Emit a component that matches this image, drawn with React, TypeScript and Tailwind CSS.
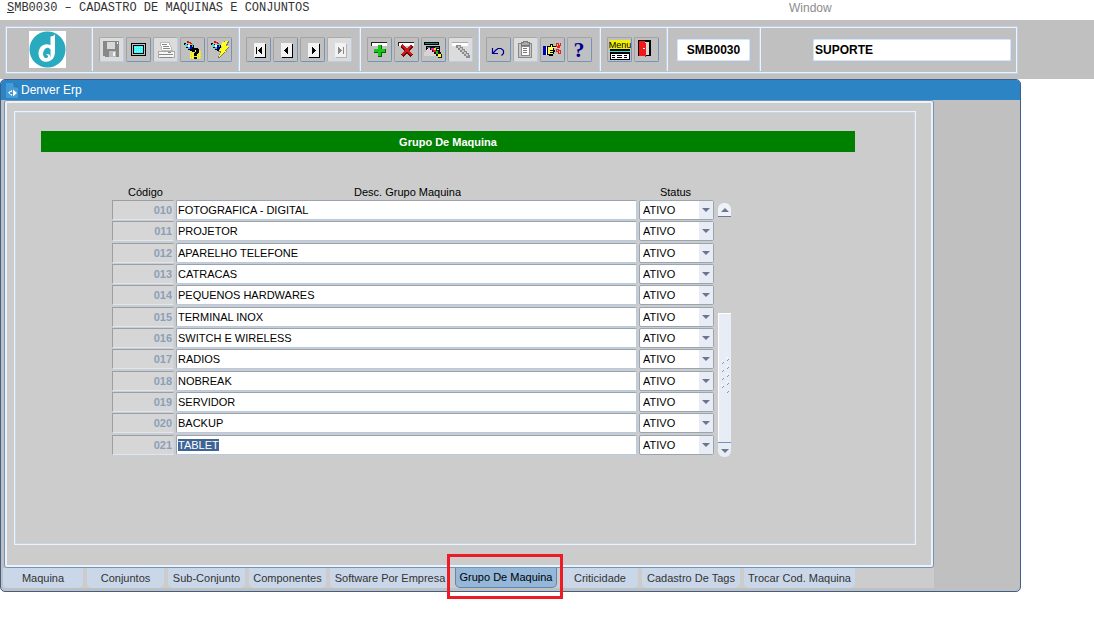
import { useEffect, useRef, type ReactNode } from "react";

const rows = [
  ["010", "FOTOGRAFICA - DIGITAL"],
  ["011", "PROJETOR"],
  ["012", "APARELHO TELEFONE"],
  ["013", "CATRACAS"],
  ["014", "PEQUENOS HARDWARES"],
  ["015", "TERMINAL INOX"],
  ["016", "SWITCH E WIRELESS"],
  ["017", "RADIOS"],
  ["018", "NOBREAK"],
  ["019", "SERVIDOR"],
  ["020", "BACKUP"],
  ["021", "TABLET"],
];

const tabs = [
  { name: "Maquina", width: "w-[80px]" },
  { name: "Conjuntos", width: "w-[77px]" },
  { name: "Sub-Conjunto", width: "w-[77px]" },
  { name: "Componentes", width: "w-[77px]" },
  { name: "Software Por Empresa", width: "w-[120px]" },
  { name: "Grupo De Maquina", width: "w-[102px]" },
  { name: "Criticidade", width: "w-[76px]" },
  { name: "Cadastro De Tags", width: "w-[98px]" },
  { name: "Trocar Cod. Maquina", width: "w-[111px]" },
];

function Tool({ label, disabled, children }: { label: string; disabled?: boolean; children: ReactNode }) {
  return (
    <button
      type="button"
      aria-label={label}
      disabled={disabled}
      className={
        disabled
          ? "h-[25px] w-[25px] shrink-0 rounded-[2px] border border-t-[#aaa] border-l-[#aaa] border-r-[#b9cde6] border-b-[#b9cde6] bg-[#dcdcdc]"
          : "h-[25px] w-[25px] shrink-0 rounded-[2px] border border-t-[#a3a3a3] border-l-[#a3a3a3] border-r-[#7394b8] border-b-[#7394b8] bg-[#c0c0c0]"
      }
    >
      <svg viewBox="1 1 23 23" className="block h-[23px] w-[23px]" shapeRendering="crispEdges">
        {children}
      </svg>
    </button>
  );
}

function Divider() {
  return (
    <div className="flex w-[2px] shrink-0 self-stretch border-l border-[#bcd0ea] bg-[#edf3fb]" />
  );
}

function Group({ className, children }: { className: string; children: ReactNode }) {
  return (
    <div className={`flex shrink-0 items-center ${className}`}>
      <div className="flex flex-1 gap-[2px] pl-[6px]">{children}</div>
      <Divider />
    </div>
  );
}

function Page({ glyph, dim }: { glyph: string; dim?: boolean }) {
  return (
    <>
      <path d="M9 7h11v14H9z" fill={dim ? "#b4b4b4" : "#000"} />
      <path d="M8 6h11v14H8z" fill="#f2f2f2" />
      <path d={glyph} fill={dim ? "#888" : "#000"} />
    </>
  );
}

function Pen() {
  return (
    <>
      <path d="M4 6h2v1h2v1h6v4h-1v2h-3v-1H8v-2H6V8H4z" fill="#000" />
      <path d="M5 7h2v1h1v2H6V9H5z" fill="#4adbe8" />
      <path d="M7 4h2v1h2v1h1v1h-2V6H7z" fill="#d01818" />
      <path d="M8 8h2v2H8z" fill="#fff" />
      <path d="M8 10h2v2H8zM12 7h1v3h-1z" fill="#16c8d8" />
      <path d="M10 9h2v3h-2z" fill="#0000e0" />
    </>
  );
}

function Logo() {
  return (
    <svg viewBox="0 0 37 37" className="block h-[37px] w-[37px] bg-white" role="img" aria-label="Denver">
      <circle cx="18.500" cy="18.500" r="18" fill="#2aaabf" />
      <path d="M21.500 5.500c2.500 0 3.800-1 4.500-2.500v17.500c0 6-3.600 10.300-8.600 10.300-4.600 0-7.900-3.400-7.900-8.300 0-5.400 3.500-9.300 8.200-9.300 1.400 0 2.700.3 3.800 1z" fill="#fff" />
      <path d="M21.500 18.500c-1.400-1.900-3.500-2.200-5-1-2.600 2.100-3.300 6.700-1 8.900 1.300 1.200 3.100.7 3.500-.6.300-1.300-.6-2.100-1.900-1.700.8-2 4.100-1.300 4 1.400 0 1.500-.8 2.700-2 3.700 2-1.400 2.600-3.700 2.400-6.700z" fill="#2aaabf" />
    </svg>
  );
}

function Toolbar() {
  return (
    <header className="h-[59px] bg-[#c0c0c0] pt-[6px] pr-[76px] pl-[5px]">
      <div className="flex h-[48px] border border-[#bcd0ea] p-px pb-[2px] inset-shadow-[0_0_0_1px_#edf3fb]">
        <div className="flex w-[86px] shrink-0 items-center">
          <div className="flex-1 pl-[22px]">
            <Logo />
          </div>
          <Divider />
        </div>
        <Group className="w-[147px]">
          <Tool label="Salvar" disabled>
            <path d="M4 4h16v16H6v-1H4z" fill="#888" />
            <path d="M8 5h8v7H8z" fill="#d8d8d8" />
            <path d="M10 14h7v6h-7z" fill="#bbb" />
            <path d="M14 15h2v4h-2zM18 5h1v2h-1z" fill="#f4f4f4" />
          </Tool>
          <Tool label="Tela">
            <path d="M5 6h15v13H5z" fill="#000" />
            <path d="M6 7h13v11H6z" fill="#c0c0c0" />
            <path d="M7 8h11v9H7z" fill="#000" />
            <path d="M8 9h9v7H8z" fill="#3ff" />
            <path d="M9 10.500h1m1 0h1m1 0h1m1 0h1M9 12.500h1m1 0h1m1 0h1m1 0h1M9 14.500h1m1 0h1m1 0h1m1 0h1" stroke="#aff" />
          </Tool>
          <Tool label="Imprimir" disabled>
            <path d="M7 5h9l3 8H9z" fill="#fff" stroke="#bbb" />
            <path d="M9 7.500h5M10 9.500h6M10 11.500h7" stroke="#888" />
            <path d="M5 14h16v6H5z" fill="#f6f6f6" stroke="#aaa" />
            <path d="M6 17.500h14M7 20.500h12" stroke="#888" />
            <path d="M15 15h3v1h-3z" fill="#888" />
          </Tool>
          <Tool label="Entrar consulta">
            <path d="M10 13h11v9H10z" fill="#f4f43c" />
            <path d="M11 13v9M14 13v9M18 13v9M20 13v9" stroke="#d4d040" strokeDasharray="1 1" />
            <Pen />
            <path d="M12 12h1v-1h5v1h1v4h-1v1h-1v2h-3v-3h1v-1h1v-2h-1v2h-3zM14 20h3v2h-3z" fill="#000" />
          </Tool>
          <Tool label="Executar consulta">
            <Pen />
            <path d="M17 4h5v2h-1v2h-1v1h2v2h-1v1h-1v1h-1v1h1v1h-2v1h-1v1h-1v1h-1v1h-1v1h-1v1h-2v-2h1v-2h1v-2h-2v-1h1v-2h1v-1h2v-2h-2V9h1V7h1V5h1z" fill="#777" />
            <path d="M18 4h3v1h-1v2h-1v2h3v1h-1v1h-1v1h-1v1h-1v1h1v1h-2v1h-1v1h-1v1h-1v1h-1v1h-1v-2h1v-2h1v-2h-2v-1h1v-2h2v-2h-2V9h1V7h1V5h2z" fill="#ffff20" />
          </Tool>
        </Group>
        <Group className="w-[121px]">
          <Tool label="Primeiro registro"><Page glyph="M10 10h1v7h-1zM15 10h1v7h-1v-1h-1v-1h-1v-1h-1v-1h1v-1h1v-1h1z" /></Tool>
          <Tool label="Registro anterior"><Page glyph="M14 10h1v7h-1v-1h-1v-1h-1v-1h-1v-1h1v-1h1v-1h1z" /></Tool>
          <Tool label="Próximo registro"><Page glyph="M12 10h1v1h1v1h1v1h1v1h-1v1h-1v1h-1v1h-1z" /></Tool>
          <Tool label="Último registro" disabled><Page dim glyph="M16 10h1v7h-1zM11 10h1v1h1v1h1v1h1v1h-1v1h-1v1h-1v1h-1z" /></Tool>
        </Group>
        <Group className="w-[119px]">
          <Tool label="Inserir registro">
            <path d="M4 5h16v4H4z" fill="#fff" /><path d="M4 5h16v1H4zM4 5h1v4H4z" fill="#222" />
            <path d="M11 8h4v4h4v4h-4v4h-4v-4H7v-4h4z" fill="#0a5f0a" />
            <path d="M11 8h3v4h4v3h-4v4h-3v-4H7v-3h4z" fill="#14c814" />
          </Tool>
          <Tool label="Excluir registro">
            <path d="M4 5h16v4H4z" fill="#fff" /><path d="M4 5h16v1H4zM4 5h1v4H4z" fill="#222" />
            <path d="M8 9l10 10M18 9L8 19" stroke="#6a0808" strokeWidth="3" />
            <path d="M8 8l10 10M17 9L8 18" stroke="#d01818" strokeWidth="2" />
          </Tool>
          <Tool label="Limpar registro">
            <path d="M3 5h15v3H3z" fill="#000" /><path d="M4 6h13v1H4z" fill="#108888" />
            <path d="M5 9h14v10H5z" fill="#000" /><path d="M6 10h12v1H6z" fill="#108888" />
            <path d="M6 12h12v6H6z" fill="#f4f4f4" />
            <path d="M3 18v-3h2v-2h2v-2h3l5 5v3H3z" fill="#d4d4d4" />
            <path d="M9 10h5v1h2v2h2v2h2v2h1v4h-4v-2h-2v-2h-2v-2h-2v-2H9z" fill="#111" />
            <path d="M10 11h3v2h-3z" fill="#ff20b0" /><path d="M12 13h3v2h-3z" fill="#e02020" />
            <path d="M13 11h2v2h-2z" fill="#ffe020" />
            <path d="M15 14h2v3h-2z" fill="#20c020" /><path d="M17 17h3v3h-3z" fill="#ffff20" />
          </Tool>
          <Tool label="Limpar bloco" disabled>
            <path d="M4 5h16v4H4z" fill="#fff" /><path d="M4 5h16v1H4z" fill="#aaa" />
            <path d="M8 8h5v2h2v2h2v2h2v2h2v2h1v3h-4v-2h-2v-2h-2v-2h-2v-2h-2v-2H8z" fill="#8c8c8c" />
            <path d="M10 9h2v2h2v2h2v2h2v2h2v2h-2v-2h-2v-2h-2v-2h-2v-2h-2z" fill="#c8c8c8" />
          </Tool>
        </Group>
        <Group className="w-[121px]">
          <Tool label="Desfazer">
            <path d="M6.500 11v5.500H12M7 16l3-3 2-1.500h3l2.500 2v3l-2 2" fill="none" stroke="#000090" strokeWidth="1.200" shapeRendering="auto" />
          </Tool>
          <Tool label="Colar" disabled>
            <path d="M5 6h13v14H5z" fill="#c8c8c8" stroke="#888" />
            <path d="M8 9h8v9H8z" fill="#fff" stroke="#888" />
            <path d="M8 5h2V4h4v1h2v3H8z" fill="#aaa" stroke="#777" />
            <path d="M10 11.500h4M10 13.500h4M10 15.500h4" stroke="#777" />
          </Tool>
          <Tool label="Lista de valores">
            <path d="M3 9h3v9H3z" fill="#0000b0" /><path d="M6 10h1v8H6z" fill="#fff" />
            <path d="M7 9h3V7h3v2h5v2h-4v2h1v2h-1v2h-1v2H9v-1H7z" fill="#000" />
            <path d="M8 10h3V8h1v2h5v1h-4v2h-3v1h3v1h-3v1h3v1H8z" fill="#ffff50" />
            <path d="M16.500 6.500h2v3h-2zM19.500 6.500h1v2h-1v2h-3M16.500 12.500h2v1h2v3h-2v-2h-2z" fill="none" stroke="#e82020" />
          </Tool>
          <Tool label="Ajuda">
            <text x="12" y="20" textAnchor="middle" fontFamily="Liberation Serif, serif" fontWeight="bold" fontSize="22" fill="#000090">?</text>
          </Tool>
        </Group>
        <Group className="w-[67px]">
          <Tool label="Menu">
            <path d="M3 3h20v10H3z" fill="#f4f000" />
            <text x="13" y="11" textAnchor="middle" fontFamily="Liberation Sans, sans-serif" fontSize="9" fill="#000">Menu</text>
            <path d="M3 12h20v11H3z" fill="#000" /><path d="M3 14h20v1H3z" fill="#2de0e8" />
            <path d="M4 17h18v5H4z" fill="#fff" />
            <path d="M5 18.500h3m2 0h5m2 0h3M5 20.500h3m2 0h5m2 0h3" stroke="#000" />
          </Tool>
          <Tool label="Sair">
            <path d="M4 3h13v16H4z" fill="#000" /><path d="M11 5h4v13h-4z" fill="#d8d8d8" />
            <path d="M5 4h6l1 3v13l-2-1H5z" fill="#f01818" /><path d="M9 11h2v1H9z" fill="#fff" />
          </Tool>
        </Group>
        <div className="flex w-[93px] shrink-0 items-center">
          <div className="flex-1 px-[8px]">
            <input aria-label="Programa" defaultValue="SMB0030" className="block h-[24px] w-full rounded-[3px] border border-[#b0c1d8] bg-white text-center text-[12px] font-bold text-black outline-none inset-shadow-[0_0_0_1px_#dbe6f3]" />
          </div>
          <Divider />
        </div>
        <div className="flex min-w-0 flex-1 items-center pr-[4px] pl-[51px]">
          <input aria-label="Usuário" defaultValue="SUPORTE" className="h-[24px] w-full min-w-0 rounded-[3px] border border-[#b0c1d8] bg-white pl-[2px] text-[12px] font-bold text-black outline-none inset-shadow-[0_0_0_1px_#dbe6f3]" />
        </div>
      </div>
    </header>
  );
}

function GroupTable() {
  const current = useRef<HTMLInputElement>(null);
  useEffect(() => {
    current.current?.focus();
    current.current?.select();
  }, []);
  return (
    <table className="flex-1 table-fixed border-collapse text-[11px] leading-[13px] text-black">
      <thead>
        <tr className="h-[16px]">
          <th className="w-[64px] p-0 pl-[3px] text-center font-normal">Código</th>
          <th className="p-0 text-center font-normal">Desc. Grupo Maquina</th>
          <th className="w-[75px] p-0 pr-[2px] text-center font-normal">Status</th>
        </tr>
      </thead>
      <tbody>
        {rows.map(([code, name], i) => (
          <tr key={code} className="h-[21px] nth-[3n+2]:h-[22px]">
            <td className="p-0 pr-[2px] align-top">
              <input disabled aria-label={`Código ${code}`} defaultValue={code} className="block h-[20px] w-full border border-t-[#9a9fa6] border-l-[#9a9fa6] border-r-[#c3d3e8] border-b-[#dbe7f5] bg-[#d6d6d6] pr-px text-right font-bold text-[#8ba0b8]" />
            </td>
            <td className="p-0 pr-[2px] align-top">
              <input
                ref={i === rows.length - 1 ? current : undefined}
                aria-label={`Descrição ${code}`}
                defaultValue={name}
                className="block h-[20px] w-full rounded-[2px] border border-t-[#9aa3ae] border-l-[#9aa3ae] border-r-[#b5cbe5] border-b-[#b5cbe5] bg-white pl-px outline-none selection:bg-[#3d6494] selection:text-white"
              />
            </td>
            <td className="p-0 align-top">
              <div className="relative">
                <select aria-label={`Status ${code}`} className="block h-[20px] w-full appearance-none rounded-[2px] border border-[#9aa5b2] bg-white pl-[3px] text-black outline-none">
                  <option>ATIVO</option>
                  <option>INATIVO</option>
                </select>
                <svg viewBox="0 0 14 18" className="pointer-events-none absolute top-px right-px h-[18px] w-[14px]">
                  <path d="M0 0h14v18H0z" fill="#e8edf5" />
                  <path d="M3 7h8l-4 4z" fill="#6b7590" />
                </svg>
              </div>
            </td>
          </tr>
        ))}
      </tbody>
    </table>
  );
}

function Scroller() {
  return (
    <div className="flex h-[254px] w-[13px] shrink-0 flex-col">
      <button type="button" aria-label="Rolar para cima" className="h-[14px] rounded-t-[6px] border-b border-[#66779a] bg-[#edf2f9]">
        <svg viewBox="0 0 13 13" className="block h-[13px] w-[13px]"><path d="M3 9h8L7 5z" fill="#6b7590" /></svg>
      </button>
      <div className="flex-1" />
      <div className="flex h-[129px] items-start border-t border-l border-white bg-[#e8edf5] pt-[42px]">
        <svg viewBox="0 0 12 38" className="block h-[38px] w-[12px]">
          <path d="M3 8l2-2m3-1l2-2M3 16l2-2m3-1l2-2M3 24l2-2m3-1l2-2M3 32l2-2m3-1l2-2m-2 10l2-2" stroke="#7f9cbd" />
          <path d="M2 6l2-2m3-1l2-2M2 14l2-2m3-1l2-2M2 22l2-2m3-1l2-2M2 30l2-2m3-1l2-2" stroke="#fff" />
        </svg>
      </div>
      <button type="button" aria-label="Rolar para baixo" className="h-[15px] rounded-b-[6px] border-t border-[#7294b8] bg-[#e8edf5]">
        <svg viewBox="0 0 13 13" className="block h-[13px] w-[13px]"><path d="M3 5h8L7 9z" fill="#6b7590" /></svg>
      </button>
    </div>
  );
}

function Tabs() {
  return (
    <nav className="mr-[86px] ml-[2px] flex h-[20px] items-start gap-[4px] bg-[#ccc]">
      {tabs.map(({ name, width }) =>
        name === "Grupo De Maquina" ? (
          <div key={name} className={`relative mx-px h-[20px] shrink-0 ${width}`}>
            <button type="button" aria-current="page" className="block h-[20px] w-full rounded-b-[5px] border border-t-0 border-[#6486ac] bg-[#94b7da] text-[11px] leading-[19px] whitespace-nowrap text-black">
              {name}
            </button>
            <div className="pointer-events-none absolute -top-[14px] -right-[6px] -left-[8px] h-[45px] border-3 border-[#ed1c24]" />
          </div>
        ) : (
          <button key={name} type="button" className={`block h-[20px] shrink-0 rounded-b-[5px] bg-[#c9d7e9] text-[11px] leading-[20px] whitespace-nowrap text-[#333] ${width}`}>
            {name}
          </button>
        ),
      )}
    </nav>
  );
}

export default function App() {
  return (
    <div className="min-h-screen bg-white font-['Liberation_Sans',Arial,sans-serif]">
      <div className="flex h-[20px] items-start text-[12px] leading-[17px]">
        <div className="flex-1 pl-[7px] font-['Liberation_Mono','Courier_New',monospace] text-[#333]">
          <span className="underline">S</span>MB0030 – CADASTRO DE MAQUINAS E CONJUNTOS
        </div>
        <div className="w-[305px] text-[#8c8c8c]">Window</div>
      </div>
      <Toolbar />
      <main className="mr-[73px] rounded-[5px] border border-[#3d5f8f] bg-[#c0c0c0] pb-[3px]">
        <h1 className="flex h-[20px] items-center gap-[2px] rounded-t-[4px] bg-[#2c84c5] pl-[5px] text-[12px] text-white">
          <svg viewBox="0 0 13 16" className="h-[16px] w-[13px]">
            <path d="M0 1h7l5 5v10H0z" fill="#449bd7" />
            <path d="M8 1l4 4H8z" fill="#3287c4" stroke="#216fa8" strokeWidth=".6" />
            <path d="M6 8L2 10.500 6 14v-2H4v-2h2zM7 7.500L11 11l-4 3.500z" fill="#fff" />
          </svg>
          Denver Erp
        </h1>
        <section className="mr-[86px] ml-[3px] rounded-[3px] border border-[#7294b8]">
          <div className="rounded-[2px] border-2 border-[#edf2f8] bg-[#ccc] pt-[8px] pr-[15px] pb-[20px] pl-[7px]">
            <div className="flex h-[434px] flex-col border border-[#edf3fb] pt-[19px] pl-[26px] inset-shadow-[0_0_0_1px_#c6d6e6]">
              <h2 className="mr-[60px] h-[21px] bg-[#008000] text-center text-[11px] leading-[22px] font-bold text-white">Grupo De Maquina</h2>
              <div className="mt-[32px] mr-[184px] ml-[71px] flex items-start gap-[4px]">
                <GroupTable />
                <div className="pt-[19px]">
                  <Scroller />
                </div>
              </div>
            </div>
          </div>
        </section>
        <Tabs />
      </main>
    </div>
  );
}
